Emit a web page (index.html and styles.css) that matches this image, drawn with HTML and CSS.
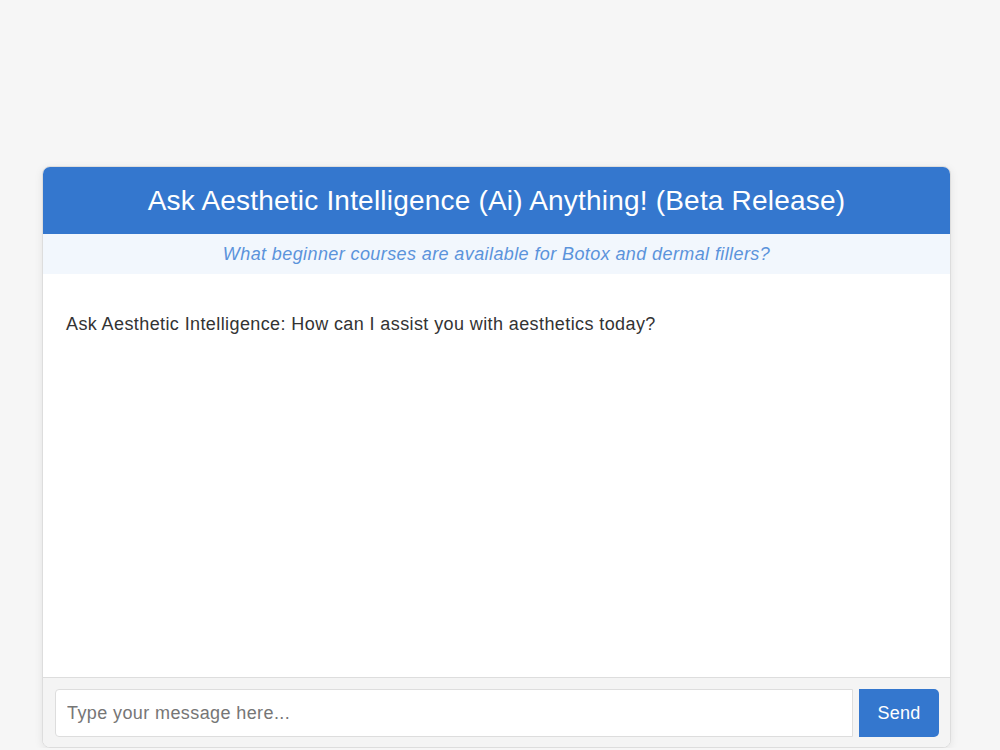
FILE: index.html
```html
<!DOCTYPE html>
<html lang="en">
<head>
    <meta charset="UTF-8">
    <meta name="viewport" content="width=device-width, initial-scale=1.0">
    <title>Ask Aesthetic Intelligence</title>
    <link rel="stylesheet" href="styles.css">
</head>
<body>
    <div class="chat-box">
        <div class="chat-header">Ask Aesthetic Intelligence (Ai) Anything! (Beta Release)</div>
        <div class="chat-hint">What beginner courses are available for Botox and dermal fillers?</div>

        <div class="chat-messages">
            <p class="message">Ask Aesthetic Intelligence: How can I assist you with aesthetics today?</p>
        </div>

        <form class="chat-input" action="#" onsubmit="return false;">
            <input type="text" name="message" placeholder="Type your message here...">
            <button type="submit">Send</button>
        </form>
    </div>
</body>
</html>
```

FILE: styles.css
```css
body {
    font-family: "Liberation Sans", Arial, sans-serif;
    margin: 0;
    padding: 0;
    background-color: #f6f6f6;
}

.chat-box {
    width: 907px;
    margin: 166px 0 0 42px;
    background-color: #fff;
    border: 1px solid #ddd;
    border-radius: 8px;
    box-shadow: 0 2px 8px rgba(0, 0, 0, 0.08);
    overflow: hidden;
    display: flex;
    flex-direction: column;
}

.chat-header {
    background-color: #3477ce;
    color: #fff;
    font-size: 28px;
    letter-spacing: 0.2px;
    text-align: center;
    height: 67px;
    line-height: 67px;
}

.chat-hint {
    background-color: #f2f7fd;
    color: #5b93db;
    font-size: 18px;
    letter-spacing: 0.4px;
    font-style: italic;
    text-align: center;
    height: 40px;
    line-height: 40px;
}

.chat-messages {
    height: 403px;
    padding: 0 23px;
}

.message {
    margin: 40px 0 0 0;
    font-size: 18px;
    letter-spacing: 0.4px;
    color: #333;
}

.chat-input {
    display: flex;
    gap: 6px;
    padding: 11px 11px 10px 12px;
    background-color: #f4f4f4;
    border-top: 1px solid #ddd;
}

.chat-input input {
    flex: 1;
    height: 48px;
    padding: 0 11px;
    font-family: inherit;
    font-size: 18px;
    letter-spacing: 0.4px;
    color: #333;
    border: 1px solid #ddd;
    border-radius: 4px 0 0 4px;
    box-sizing: border-box;
    background-color: #fff;
}

.chat-input input::placeholder {
    color: #767676;
}

.chat-input button {
    width: 80px;
    height: 48px;
    font-family: inherit;
    font-size: 18px;
    letter-spacing: 0.3px;
    color: #fff;
    background-color: #3477ce;
    border: none;
    border-radius: 0 5px 5px 0;
    cursor: pointer;
}

.chat-input button:hover {
    background-color: #2a63ad;
}
```
